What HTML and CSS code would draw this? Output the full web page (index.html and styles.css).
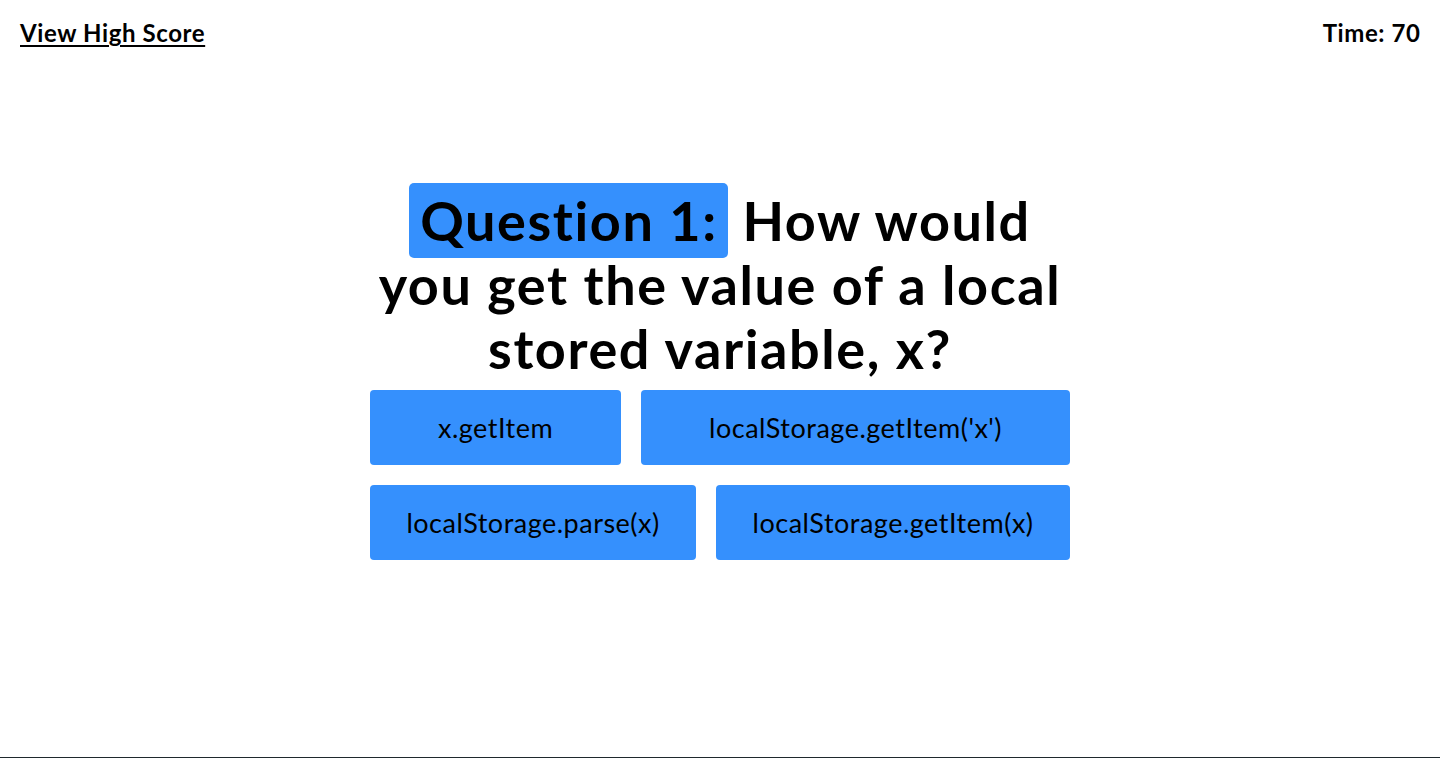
FILE: index.html
```html
<!DOCTYPE html>
<html lang="en">
<head>
<meta charset="utf-8">
<title>Code Quiz</title>
<link rel="stylesheet" href="styles.css">
</head>
<body>
<div class="page">
  <header class="topbar">
    <a class="highscore-link" href="#">View High Score</a>
    <div class="timer">Time: 70</div>
  </header>
  <main class="quiz">
    <h1 class="question"><span class="question-label">Question 1:</span> How would you get the value of a local stored variable, x?</h1>
    <div class="answers">
      <button class="answer">x.getItem</button>
      <button class="answer">localStorage.getItem('x')</button>
      <button class="answer">localStorage.parse(x)</button>
      <button class="answer">localStorage.getItem(x)</button>
    </div>
  </main>
</div>
<footer class="footer"></footer>
</body>
</html>
```
FILE: styles.css
```css
html, body {
  margin: 0;
  padding: 0;
}
body {
  font-family: "Lato", "Open Sans", sans-serif;
  color: #000;
  background: #fff;
  overflow: hidden;
}
.page {
  min-height: calc(100vh - 1px);
}
.topbar {
  display: flex;
  justify-content: space-between;
  align-items: flex-start;
  padding: 18px 20px 0 20px;
  height: 52px;
  font-size: 24px;
  font-weight: 700;
  line-height: 30px;
  letter-spacing: 0.6px;
}
.highscore-link {
  color: #000;
  text-decoration: underline;
  text-decoration-thickness: 2px;
  text-underline-offset: 3px;
}
.timer {
  margin-right: -0.6px;
}
.quiz {
  width: 700px;
  margin: 0 auto;
}
.question {
  margin: 119px 0 0 0;
  text-align: center;
  font-size: 54px;
  line-height: 64px;
  font-weight: 700;
  letter-spacing: 1.6px;
}
.question-label {
  background: #3590fd;
  border-radius: 5px;
  padding: 5px 10px 5px 11px;
}
.answers {
  display: flex;
  flex-wrap: wrap;
  gap: 20px;
  margin-top: 9px;
}
.answer {
  flex: 1 1 auto;
  height: 75px;
  padding: 0 20px;
  border: none;
  border-radius: 4px;
  background: #3590fd;
  color: #000;
  font-family: inherit;
  font-size: 27px;
  letter-spacing: 0.5px;
  cursor: pointer;
}
.footer {
  border-top: 1px solid #1f292d;
  height: 20px;
}
```
